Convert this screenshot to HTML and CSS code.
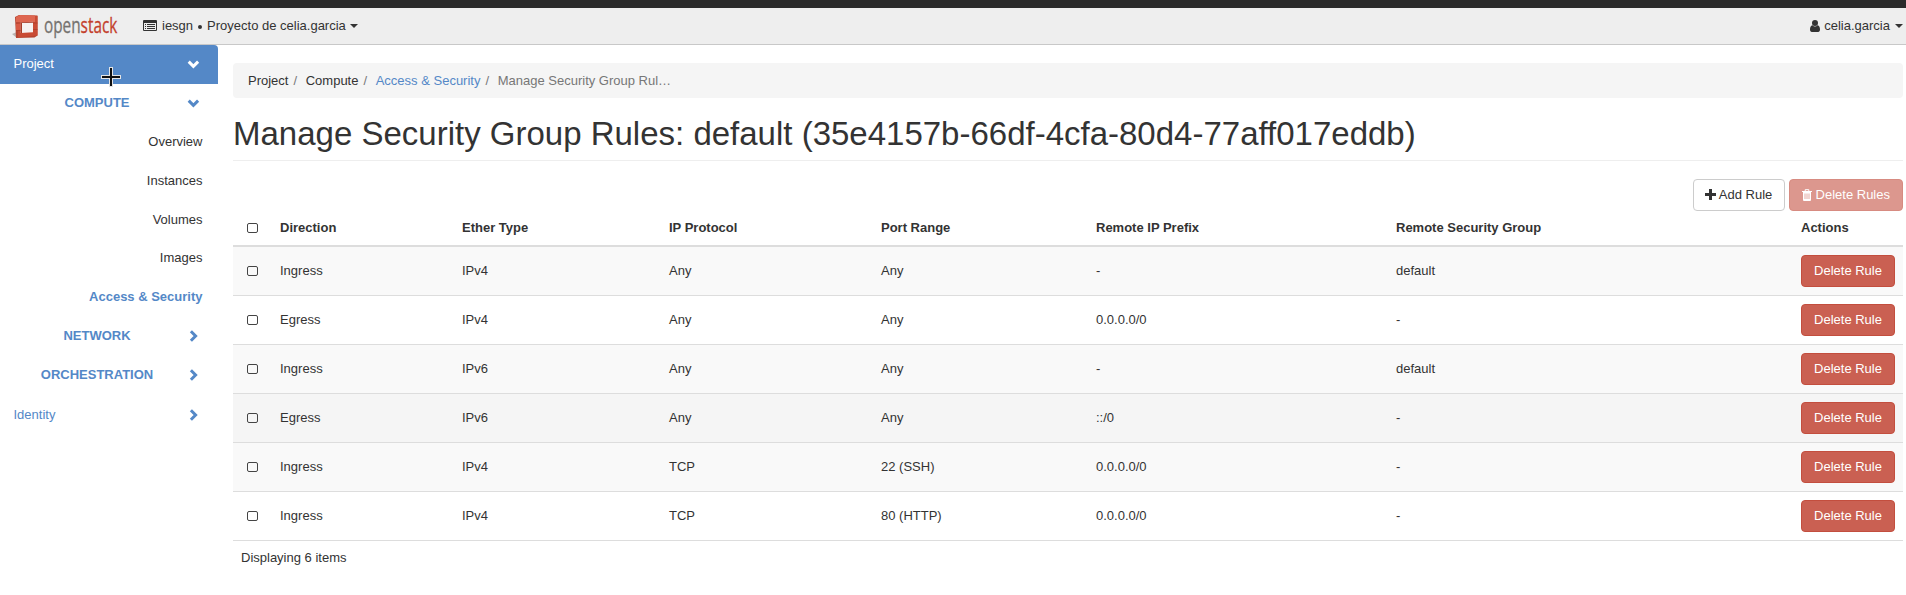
FILE: index.html
```html
<!DOCTYPE html>
<html lang="en">
<head>
<meta charset="utf-8">
<title>Manage Security Group Rules</title>
<link rel="stylesheet" href="styles.css">
</head>
<body>
<svg class="defs" aria-hidden="true">
  <symbol id="down" viewBox="0 0 14 14"><path d="M2.700 4.600 7.400 9.300l4.700-4.700" fill="none" stroke="currentColor" stroke-width="3"/></symbol>
  <symbol id="right" viewBox="0 0 14 14"><path d="M4.900 2.300 9.600 7l-4.700 4.700" fill="none" stroke="currentColor" stroke-width="3"/></symbol>
</svg>
<header class="navbar">
  <a class="brand">
    <svg width="27" height="25" viewBox="0 0 27 25">
      <path d="M0 20l5-2v6z" fill="#b9b2b0"/>
      <path d="M3 3 7 1l18.500.5v20l-3 2L4 24z" fill="#b5432f"/>
      <path d="M6.500 2.500 25.500 2v19.500L6 23.500z" fill="#c94b34"/>
      <path d="M4 3 8 1l15 .5V8L4 8.500z" fill="#de6650"/>
      <path d="M4 9.500l4-.3v6.500l-4 .5z" fill="#d85a44"/>
      <path d="M8.700 8.200 21 7.700v10.500L8.700 19z" fill="#f6f2f1"/>
      <path d="M8.700 8.200 21 7.700v1l-11 .4V19H8.700z" fill="#a83c29"/>
      <path d="M4 9h4.500M4 16.500h4.500M21 9h4.500M21 15.500h4.500" stroke="#a83c29" stroke-width=".7"/>
    </svg>
    <span class="wordmark"><span>open</span><span class="logo-red">stack</span></span>
  </a>
  <a class="nav-link context">
    <svg class="list-icon" width="14" height="11" viewBox="0 0 14 11"><path fill="currentColor" fill-rule="evenodd" d="M1 0h12q1 0 1 1v9q0 1-1 1H1q-1 0-1-1V1q0-1 1-1zM1 3v7h12V3zM2 4h1v1H2zM4 4h8v1H4zM2 6h1v1H2zM4 6h8v1H4zM2 8h1v1H2zM4 8h8v1H4z"/></svg>
    <span>iesgn</span><i class="dot"></i><span>Proyecto de celia.garcia</span><i class="caret"></i>
  </a>
  <a class="nav-link user">
    <svg class="user-icon" width="10" height="12" viewBox="0 0 10 12"><path fill="currentColor" d="M5 0a2.900 2.900 0 1 1 0 6 2.900 2.900 0 0 1 0-6zM2.400 5.200a3.700 3.700 0 0 0 5.200 0C9.300 5.400 10 7.500 10 9.500 10 11 9.300 12 8.200 12H1.800C.7 12 0 11 0 9.500c0-2 .7-4.100 2.400-4.300z"/></svg>
    <span>celia.garcia</span><i class="caret"></i>
  </a>
</header>
<div class="layout">
  <nav class="sidebar">
    <a class="dash active"><span>Project</span><svg class="chev"><use href="#down"/></svg></a>
    <a class="group"><span>COMPUTE</span><svg class="chev"><use href="#down"/></svg></a>
    <a class="panel">Overview</a>
    <a class="panel">Instances</a>
    <a class="panel">Volumes</a>
    <a class="panel short">Images</a>
    <a class="panel current">Access &amp; Security</a>
    <a class="group"><span>NETWORK</span><svg class="chev"><use href="#right"/></svg></a>
    <a class="group"><span>ORCHESTRATION</span><svg class="chev"><use href="#right"/></svg></a>
    <a class="dash"><span>Identity</span><svg class="chev"><use href="#right"/></svg></a>
    <svg class="pointer" width="22" height="22" viewBox="0 0 22 22"><path d="M11 1v20M1 11h20" stroke="#e4e4e4" stroke-width="4"/><path d="M11 2v18M2 11h18" stroke="#111" stroke-width="2"/></svg>
  </nav>
  <main class="content">
    <ol class="breadcrumb"><li>Project</li><li>Compute</li><li><a>Access &amp; Security</a></li><li class="muted">Manage Security Group Rul…</li></ol>
    <h1>Manage Security Group Rules: default (35e4157b-66df-4cfa-80d4-77aff017eddb)</h1>
    <div class="actions">
      <button class="btn add"><svg class="plus" width="11" height="11" viewBox="0 0 11 11"><path d="M5.500 0v11M0 5.500h11" stroke="currentColor" stroke-width="3"/></svg>Add Rule</button>
      <button class="btn danger faded"><svg class="trash" width="10" height="12" viewBox="0 0 10 12"><path d="M0 2.500h10M3.200 2.300V.7h3.600v1.600" fill="none" stroke="currentColor"/><path fill="currentColor" fill-rule="evenodd" d="M1 3h8v8q0 1-1 1H2q-1 0-1-1zM2.600 4.500v5.500h.8V4.500zM4.600 4.500v5.500h.8V4.500zM6.600 4.500v5.500h.8V4.500z"/></svg>Delete Rules</button>
    </div>
    <table class="rules">
      <colgroup><col class="c-check"><col class="c-dir"><col class="c-ether"><col class="c-proto"><col class="c-port"><col class="c-prefix"><col class="c-group"><col></colgroup>
      <thead><tr><th><i class="check"></i></th><th>Direction</th><th>Ether Type</th><th>IP Protocol</th><th>Port Range</th><th>Remote IP Prefix</th><th>Remote Security Group</th><th>Actions</th></tr></thead>
      <tbody>
        <tr><td><i class="check"></i></td><td>Ingress</td><td>IPv4</td><td>Any</td><td>Any</td><td>-</td><td>default</td><td><button class="btn danger">Delete Rule</button></td></tr>
        <tr><td><i class="check"></i></td><td>Egress</td><td>IPv4</td><td>Any</td><td>Any</td><td>0.0.0.0/0</td><td>-</td><td><button class="btn danger">Delete Rule</button></td></tr>
        <tr><td><i class="check"></i></td><td>Ingress</td><td>IPv6</td><td>Any</td><td>Any</td><td>-</td><td>default</td><td><button class="btn danger">Delete Rule</button></td></tr>
        <tr class="hovered"><td><i class="check"></i></td><td>Egress</td><td>IPv6</td><td>Any</td><td>Any</td><td>::/0</td><td>-</td><td><button class="btn danger">Delete Rule</button></td></tr>
        <tr><td><i class="check"></i></td><td>Ingress</td><td>IPv4</td><td>TCP</td><td>22 (SSH)</td><td>0.0.0.0/0</td><td>-</td><td><button class="btn danger">Delete Rule</button></td></tr>
        <tr><td><i class="check"></i></td><td>Ingress</td><td>IPv4</td><td>TCP</td><td>80 (HTTP)</td><td>0.0.0.0/0</td><td>-</td><td><button class="btn danger">Delete Rule</button></td></tr>
      </tbody>
    </table>
    <p class="count">Displaying 6 items</p>
  </main>
</div>
</body>
</html>
```
FILE: styles.css
```css
* { box-sizing: border-box; }
body { margin: 0; font: 13px/18px "Liberation Sans", Arial, sans-serif; color: #333; background: #fff; overflow: hidden; }
.defs { display: none; }
svg { flex: none; }
.navbar { display: flex; align-items: center; height: 45px; background: #eee; border-top: 8px solid #2b2b2b; border-bottom: 1px solid #c8c8c8; padding: 0 3px 0 12px; }
.brand { display: flex; align-items: center; width: 131px; height: 28px; }
.wordmark { display: flex; margin-left: 5px; font: 21px/28px "Open Sans", sans-serif; color: #75726f; transform: scaleX(.73); transform-origin: 0 50%; padding-bottom: 3px; -webkit-text-stroke: .3px; }
.logo-red { color: #c43f2b; }
.nav-link { display: flex; align-items: center; padding-bottom: 1px; }
.user { margin-left: auto; }
.list-icon { margin-right: 5px; }
.user-icon { margin-right: 4px; }
.dot { width: 4px; height: 4px; border-radius: 50%; background: #333; margin: 2px 5px 0; }
.caret { margin-left: 5px; border: 4px solid transparent; border-top-color: #333; border-bottom: 0; }
.context .caret { margin-left: 4px; }
.layout { display: flex; }
.sidebar { width: 218px; flex: none; color: #5488c7; position: relative; }
.sidebar a { display: flex; align-items: center; height: 39px; }
.sidebar .dash { justify-content: space-between; padding: 0 18px 1px 13.500px; }
.sidebar .dash:not(.active) { height: 41px; }
.sidebar .active { background: #5488c7; color: #fff; border-radius: 0 4px 0 0; }
.sidebar .group { font-weight: bold; padding: 0 18px 2px 0; }
.group span { width: 194px; text-align: center; margin-right: -8px; }
.sidebar .panel { justify-content: flex-end; padding: 0 15.500px 2px 0; color: #333; }
.sidebar .short { height: 38px; }
.sidebar .current { color: #5488c7; font-weight: bold; }
.chev { width: 14px; height: 14px; }
.pointer { position: absolute; left: 100px; top: 21px; }
.content { flex: 1; padding: 18px 3px 0 15px; }
.breadcrumb { display: flex; list-style: none; margin: 0; height: 35px; align-items: center; padding: 0 15px; background: #f5f5f5; border-radius: 4px; }
.breadcrumb li + li::before { content: "/\00a0"; padding: 0 5px; color: #777; }
.breadcrumb a { color: #5488c7; }
.breadcrumb .muted { color: #777; }
h1 { margin: 18px 0; height: 45px; padding-bottom: 8px; font-size: 33px; line-height: 36px; font-weight: normal; border-bottom: 1px solid #eee; white-space: nowrap; }
.actions { display: flex; justify-content: flex-end; gap: 4px; }
.btn { display: inline-flex; align-items: center; justify-content: center; height: 32px; padding: 0 12px; font: inherit; color: #333; background: #fff; border: 1px solid #ccc; border-radius: 4px; white-space: nowrap; }
.add { width: 92px; padding: 0; }
.danger { color: #fff; background: #ca6052; border-color: #c34e3e; }
.faded { opacity: .65; }
.plus { margin: -1px 3px 0 0; }
.trash { margin-right: 4px; }
.rules { width: 100%; table-layout: fixed; border-collapse: separate; border-spacing: 0; }
.rules th { height: 36px; padding: 0; padding-left: 8px; text-align: left; border-bottom: 2px solid #ddd; }
.rules td { height: 49px; padding: 0 8px; border-bottom: 1px solid #ddd; }
.rules tbody tr:nth-child(odd) { background: #f9f9f9; }
.rules tbody .hovered { background: #f5f5f5; }
.rules .btn { display: flex; width: 94px; }
.c-check { width: 39px; }
.c-dir { width: 182px; }
.c-ether { width: 207px; }
.c-proto { width: 212px; }
.c-port { width: 215px; }
.c-prefix { width: 300px; }
.c-group { width: 405px; }
.check { display: block; width: 11px; height: 10px; margin-left: 6px; border: 1px solid #444; border-radius: 2px; }
.count { margin: 8px 8px 0; }
```
